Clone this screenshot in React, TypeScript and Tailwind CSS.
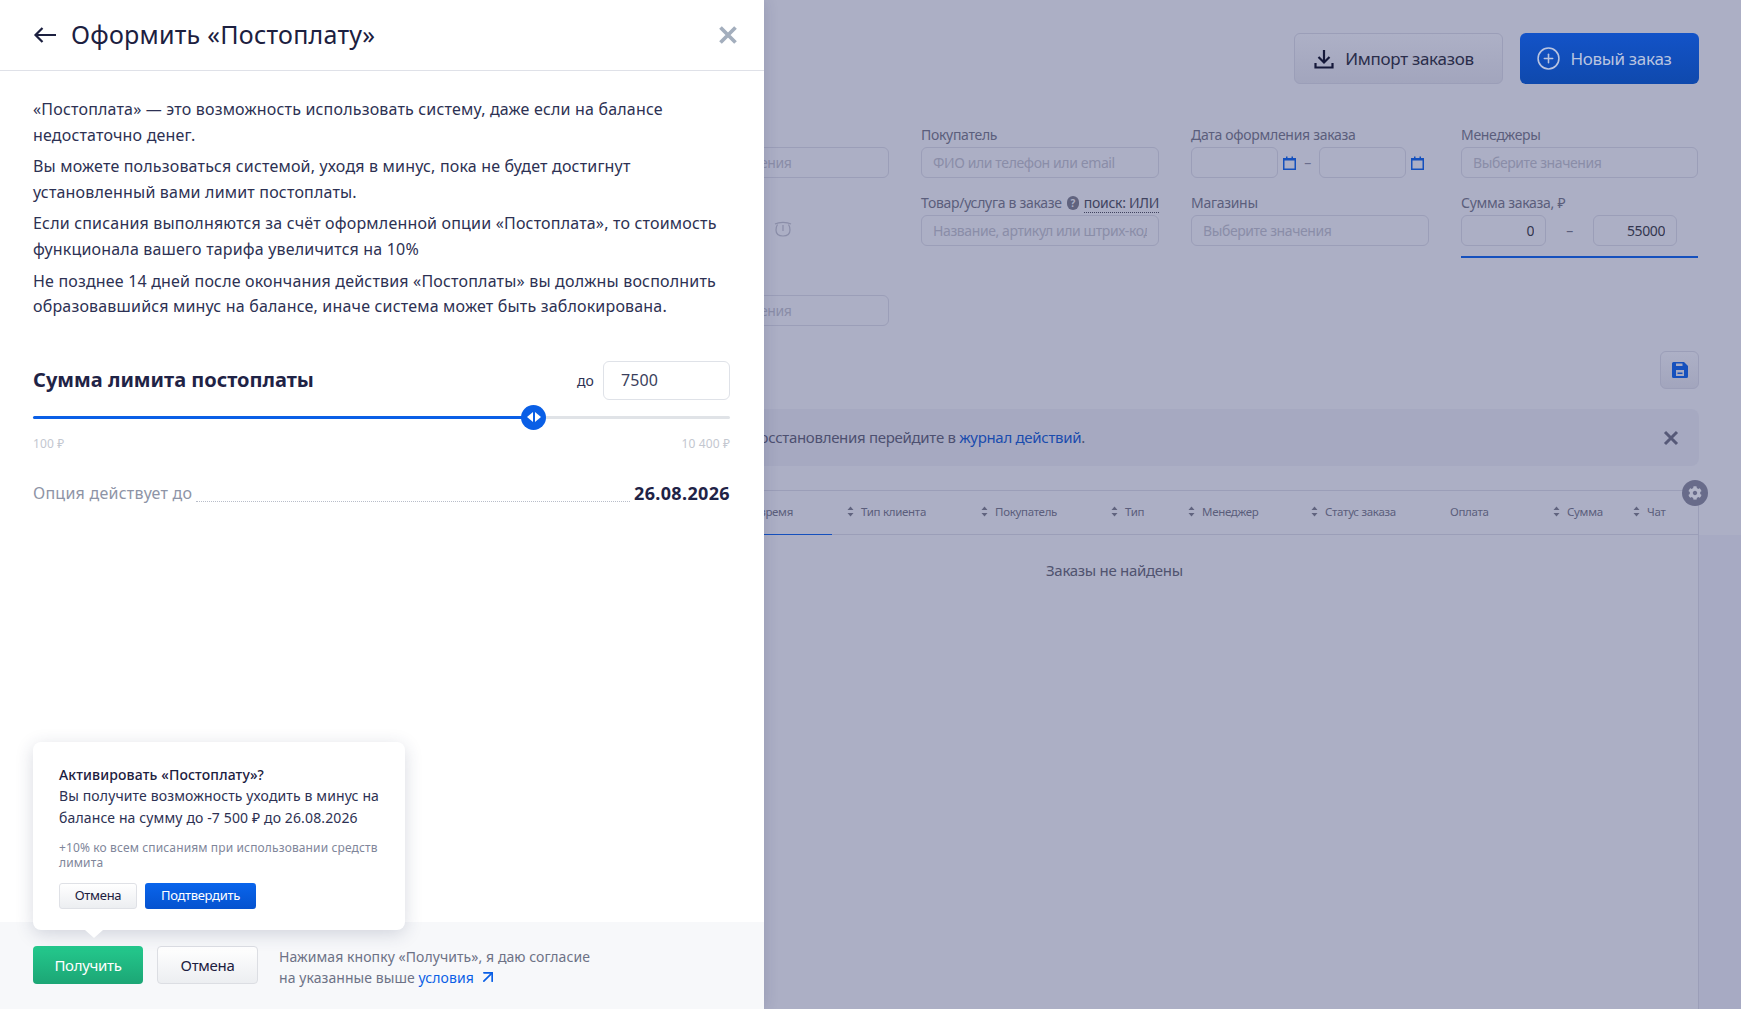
import React from 'react';
import { ArrowUpRight, CirclePlus } from 'lucide-react';
import { FaCog } from 'react-icons/fa';

const Calendar = () => (
  <svg width="13" height="14" viewBox="0 0 13 14" className="shrink-0 text-[#1550bd]">
    <rect x="0.75" y="2.75" width="11.5" height="10.5" fill="none" stroke="currentColor" strokeWidth="1.5" />
    <rect x="0" y="2" width="13" height="2.5" fill="currentColor" />
    <rect x="3" y="0.5" width="1.5" height="2" fill="currentColor" />
    <rect x="8.5" y="0.5" width="1.5" height="2" fill="currentColor" />
  </svg>
);

const Sort = () => (
  <svg width="7" height="11" viewBox="0 0 7 11" className="shrink-0 text-[#60637f]">
    <path d="M3.5 0.5 6.5 4H0.5Z M3.5 10.5 0.5 7H6.5Z" fill="currentColor" />
  </svg>
);

const Cross = ({ size, className }: { size: number; className: string }) => (
  <svg width={size} height={size} viewBox="0 0 16 16" className={className}>
    <path d="M2 2 14 14 M14 2 2 14" stroke="currentColor" strokeWidth="3" fill="none" />
  </svg>
);

const Field = ({ label, children }: { label: React.ReactNode; children: React.ReactNode }) => (
  <div className="flex flex-col gap-[2px]">
    <div className="h-[20px] text-[14px] leading-[20px] text-[#5b5e7c] whitespace-nowrap">{label}</div>
    {children}
  </div>
);

const Input = ({ text, className = '' }: { text?: string; className?: string }) => (
  <div className={`h-[31px] rounded-[6px] border border-[#9b9eb8] px-[11px] text-[14px] leading-[29px] tracking-[-0.4px] ${className}`}>
    <div className="overflow-hidden whitespace-nowrap">{text}</div>
  </div>
);

const columns = [
  { title: 'Тип клиента', width: 'w-[134px]' },
  { title: 'Покупатель', width: 'w-[130px]' },
  { title: 'Тип', width: 'w-[77px]' },
  { title: 'Менеджер', width: 'w-[123px]' },
  { title: 'Статус заказа', width: 'w-[139px]' },
];

const Paragraphs = [
  '«Постоплата» — это возможность использовать систему, даже если на балансе недостаточно денег.',
  'Вы можете пользоваться системой, уходя в минус, пока не будет достигнут установленный вами лимит постоплаты.',
  'Если списания выполняются за счёт оформленной опции «Постоплата», то стоимость функционала вашего тарифа увеличится на 10%',
  'Не позднее 14 дней после окончания действия «Постоплаты» вы должны восполнить образовавшийся минус на балансе, иначе система может быть заблокирована.',
];

export default function App() {
  return (
    <div className="flex h-[1009px] w-full overflow-hidden font-['Noto_Sans',sans-serif] tracking-[0.13px]">
      <aside className="relative z-10 flex w-[764px] shrink-0 flex-col bg-white shadow-[0_0_14px_rgba(40,40,90,0.16)]">
        <header className="flex h-[71px] shrink-0 items-center justify-between border-b border-[#dfe1e8] pl-[33px] pr-[26px]">
          <div className="flex items-center gap-[14px]">
            <svg width="24" height="18" viewBox="0 0 24 18" className="text-[#1c2040]">
              <path d="M23 9H2.5 M9.5 2 2.5 9 9.5 16" stroke="currentColor" strokeWidth="2.2" fill="none" />
            </svg>
            <h1 className="text-[25px] font-normal tracking-[0.25px] text-[#1c2040]">Оформить «Постоплату»</h1>
          </div>
          <Cross size={20} className="text-[#a3aebd]" />
        </header>

        <div className="flex flex-1 flex-col pl-[33px] pr-[34px] pt-[26px]">
          <div className="flex flex-col gap-[6px] text-[16px] leading-[25.6px] tracking-[0.18px] text-[#2d3153]">
            {Paragraphs.map((p) => (
              <p key={p}>{p}</p>
            ))}
          </div>

          <div className="mt-[41px] flex h-[39px] items-center justify-between">
            <h2 className="text-[20px] font-bold tracking-[0px] text-[#1f2346]">Сумма лимита постоплаты</h2>
            <div className="flex items-center gap-[9px]">
              <span className="text-[14px] text-[#2d3153]">до</span>
              <div className="h-[39px] w-[127px] rounded-[6px] border border-[#dfe2e8] px-[17px] text-[16px] leading-[36px] text-[#3b3f5c]">7500</div>
            </div>
          </div>

          <div className="relative mt-[16px] h-[3px] rounded bg-[#e0e3e7]">
            <div className="h-full w-[501px] rounded bg-[#0a5fe6]" />
            <div className="absolute left-[488px] top-[-11px] flex h-[25px] w-[25px] items-center justify-center gap-[2px] rounded-full bg-[#0a5fe6]">
              <span className="h-0 w-0 border-y-[5px] border-r-[6px] border-y-transparent border-r-white" />
              <span className="h-0 w-0 border-y-[5px] border-l-[6px] border-y-transparent border-l-white" />
            </div>
          </div>

          <div className="mt-[17px] flex justify-between text-[12px] leading-[16px] text-[#c3c7d0]">
            <span>100 ₽</span>
            <span>10 400 ₽</span>
          </div>

          <div className="mt-[29px] flex items-end">
            <span className="text-[16px] leading-[24px] tracking-[0.25px] text-[#8e94a6]">Опция действует до</span>
            <span className="mx-[4px] mb-[3px] flex-1 border-b border-dotted border-[#b8bdc9]" />
            <span className="text-[18px] font-bold leading-[24px] tracking-[0.35px] text-[#1f2346]">26.08.2026</span>
          </div>
        </div>

        <footer className="relative flex h-[87px] shrink-0 items-start gap-[14px] bg-[#f7f8fa] pl-[33px] pt-[24px]">
          <div className="absolute bottom-[79px] left-[33px] w-[372px] rounded-[8px] bg-white pb-[21px] pl-[26px] pr-[22px] pt-[23px] shadow-[0_4px_18px_rgba(40,50,90,0.18)]">
            <div className="text-[14px] font-medium leading-[20px] text-[#1c2040]">Активировать «Постоплату»?</div>
            <p className="text-[14px] leading-[22px] text-[#2d3153]">
              Вы получите возможность уходить в минус на балансе на сумму до -7 500 ₽ до 26.08.2026
            </p>
            <p className="mt-[11px] text-[12px] leading-[15px] text-[#80869a]">+10% ко всем списаниям при использовании средств лимита</p>
            <div className="mt-[13px] flex gap-[8px] tracking-[-0.3px]">
              <button className="h-[26px] w-[78px] rounded-[3px] border border-[#dfe1e6] bg-gradient-to-b from-white to-[#eceef1] text-[13px] text-[#1c2040]">Отмена</button>
              <button className="h-[26px] w-[111px] rounded-[3px] bg-gradient-to-b from-[#0a65ec] to-[#0552cf] text-[13px] text-white">Подтвердить</button>
            </div>
            <span className="absolute bottom-[-8px] left-[52px] h-0 w-0 border-x-[9px] border-t-[8px] border-x-transparent border-t-white" />
          </div>
          <button className="h-[38px] w-[110px] rounded-[4px] bg-gradient-to-b from-[#24c98d] to-[#1ca675] text-[15px] tracking-[-0.3px] text-white">Получить</button>
          <button className="h-[38px] w-[101px] rounded-[4px] border border-[#dcdee3] bg-gradient-to-b from-white to-[#eceef1] text-[15px] tracking-[-0.3px] text-[#1c2040]">Отмена</button>
          <p className="ml-[7px] text-[14px] leading-[21px] tracking-[0.07px] text-[#6d7286]">
            Нажимая кнопку «Получить», я даю согласие
            <br />
            на указанные выше <span className="text-[#0a5fe6]">условия</span>
            <ArrowUpRight size={20} className="ml-[4px] inline align-[-4px] text-[#0a5fe6]" />
          </p>
        </footer>
      </aside>

      <main className="flex min-w-0 flex-1 flex-col items-end overflow-hidden bg-[#acafc5] pr-[42px] tracking-[-0.3px]">
        <div className="mt-[33px] flex gap-[17px]">
          <button className="flex h-[51px] w-[209px] items-center justify-center gap-[11px] rounded-[6px] border border-[#9b9eb8] bg-gradient-to-b from-[#adb0c6] to-[#a2a5bd] pr-[9px] text-[17px] text-[#2a2d4a]">
            <svg width="20" height="20" viewBox="0 0 20 20" className="text-[#15183a]">
              <path d="M10 1V13.5 M4.5 8 10 13.5 15.5 8 M1.5 14V18.5H18.5V14" stroke="currentColor" strokeWidth="2.2" fill="none" />
            </svg>
            Импорт заказов
          </button>
          <button className="flex h-[51px] w-[179px] items-center justify-center gap-[9px] rounded-[6px] bg-gradient-to-b from-[#1353c8] to-[#0f49ad] pr-[11px] text-[17px] text-[#b9c4e0]">
            <CirclePlus size={25} strokeWidth={1.5} />
            Новый заказ
          </button>
        </div>

        <div className="mr-[1px] mt-[41px] grid w-[1047px] shrink-0 grid-cols-[238px_238px_238px_237px] gap-x-[32px] gap-y-[15px]">
          <Field label="Номер заказа">
            <Input className="text-[#8a8da8]" text="Выберите значения" />
          </Field>
          <Field label="Покупатель">
            <Input className="text-[#8a8da8]" text="ФИО или телефон или email" />
          </Field>
          <Field label="Дата оформления заказа">
            <div className="flex items-center">
              <Input className="w-[87px]" />
              <span className="ml-[5px] flex"><Calendar /></span>
              <span className="w-[23px] text-center text-[14px] text-[#6a6d8c]">–</span>
              <Input className="w-[87px]" />
              <span className="ml-[5px] flex"><Calendar /></span>
            </div>
          </Field>
          <Field label="Менеджеры">
            <Input className="text-[#8a8da8]" text="Выберите значения" />
          </Field>

          <div className="pl-[123px] pt-[28px]">
            <svg width="18" height="16" viewBox="0 0 18 16" className="text-[#8a8da8]">
              <path d="M1 3C5 0.8 13 0.8 17 3 M3.5 3.5C2.5 5 2 6.5 2 9C2 13 5 15 9 15C13 15 16 13 16 9C16 6.5 15.5 5 14.5 3.5 M9 4V10" stroke="currentColor" strokeWidth="1.2" fill="none" />
            </svg>
          </div>
          <Field
            label={
              <div className="flex items-center">
                Товар/услуга в заказе
                <span className="ml-[5px] flex h-[14px] w-[14px] items-center justify-center rounded-full bg-[#60637f] text-[10px] font-bold text-[#acafc5]">?</span>
                <span className="ml-[5px] border-b border-dotted border-[#40435f] leading-[18px] text-[#40435f]">поиск: ИЛИ</span>
              </div>
            }
          >
            <Input className="text-[#8a8da8]" text="Название, артикул или штрих-код" />
          </Field>
          <Field label="Магазины">
            <Input className="text-[#8a8da8]" text="Выберите значения" />
          </Field>
          <div className="h-[65px]">
            <Field label="Сумма заказа, ₽">
              <div className="flex items-center">
                <Input className="w-[85px] text-right text-[#33364f]" text="0" />
                <span className="w-[47px] text-center text-[14px] text-[#5b5e7c]">–</span>
                <Input className="w-[84px] text-right text-[#33364f]" text="55000" />
              </div>
            </Field>
            <div className="mt-[10px] h-[2px] bg-[#1550bd]" />
          </div>

          <div className="flex h-[53px] flex-col justify-end">
            <Input className="text-[#8a8da8]" text="Выберите значения" />
          </div>
        </div>

        <button className="mt-[25px] flex h-[38px] w-[39px] shrink-0 items-center justify-center rounded-[6px] border border-[#9b9eb8] bg-gradient-to-b from-[#adb0c6] to-[#a2a5bd]">
          <svg width="16" height="16" viewBox="0 0 16 16" className="text-[#1550bd]">
            <path d="M0 1.5A1.5 1.5 0 0 1 1.5 0H12L16 4V14.5A1.5 1.5 0 0 1 14.5 16H1.5A1.5 1.5 0 0 1 0 14.5Z M4 8V14H12V8Z M4 1.5V4H10.5V1.5Z" fill="currentColor" fillRule="evenodd" />
            <rect x="5.5" y="10.5" width="5" height="1.5" fill="currentColor" />
          </svg>
        </button>

        <div className="mt-[20px] flex h-[57px] w-[1200px] shrink-0 items-center justify-end rounded-[8px] bg-[#a6a9c1] pr-[20px]">
          <span className="mr-[578px] whitespace-nowrap text-[15px] text-[#4d5070]">
            Для восстановления перейдите в <span className="text-[#1a4cae]">журнал действий</span>.
          </span>
          <Cross size={16} className="text-[#565978]" />
        </div>

        <div className="relative mt-[24px] w-[1200px] shrink-0 flex-1 border-r border-[#9b9eb8]">
          <div className="absolute left-full top-[45px] bottom-0 ml-px w-[42px] bg-[#a7aac3]" />
          <div className="absolute right-[-10px] top-[-10px] flex h-[26px] w-[26px] items-center justify-center rounded-full bg-[#686b8a]">
            <FaCog size={14} className="text-[#b3b6c9]" />
          </div>
          <div className="flex h-[45px] items-center justify-end border-y border-[#9b9eb8] pb-[2px] text-[11.5px] text-[#5b5e7c]">
            <div className="relative flex h-full w-[120px] items-center justify-end pr-[39px]">
              Дата и время
              <span className="absolute bottom-[-3px] left-0 h-px w-full bg-[#1550bd]" />
            </div>
            <div className="w-[15px]" />
            {columns.map((c) => (
              <div key={c.title} className={`flex items-center gap-[7px] ${c.width}`}>
                <Sort />
                {c.title}
              </div>
            ))}
            <div className="w-[103px] text-left">Оплата</div>
            <div className="flex w-[80px] items-center gap-[7px]">
              <Sort />
              Сумма
            </div>
            <div className="flex w-[65px] items-center gap-[7px]">
              <Sort />
              Чат
            </div>
          </div>
          <div className="mt-[24px] pl-[547px] text-[15px] text-[#50536f]">Заказы не найдены</div>
        </div>
      </main>
    </div>
  );
}
